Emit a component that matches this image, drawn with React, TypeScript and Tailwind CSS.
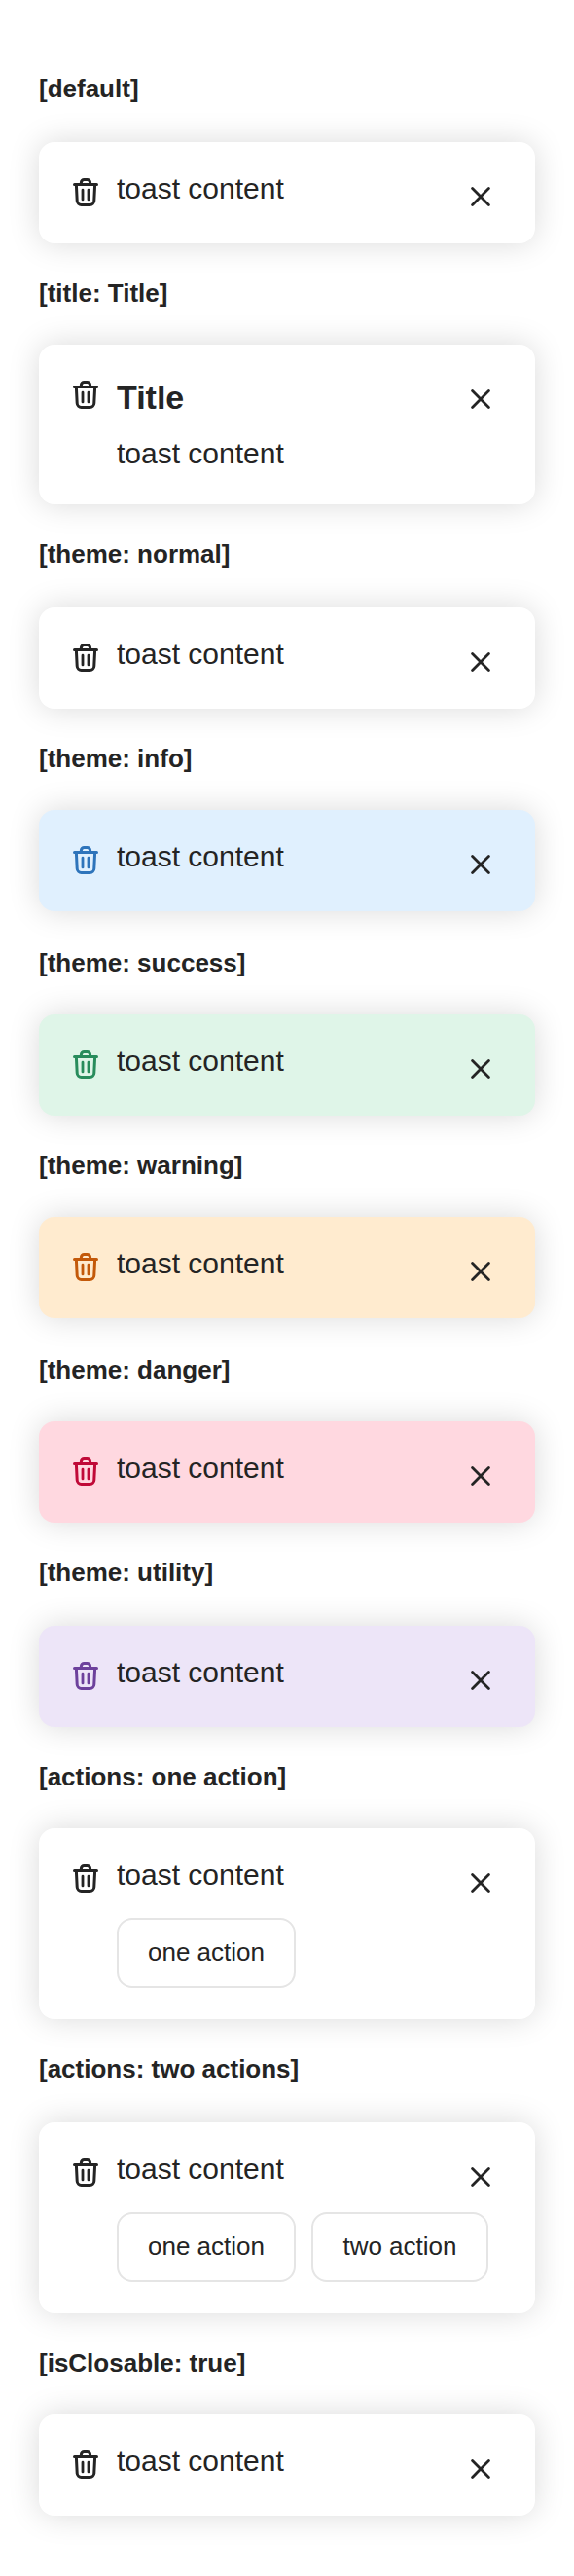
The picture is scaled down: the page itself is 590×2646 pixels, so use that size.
import React from "react";

type Theme = "normal" | "info" | "success" | "warning" | "danger" | "utility";

const surfaces: Record<Theme, string> = {
  normal: "bg-white",
  info: "bg-[#e0f0fe]",
  success: "bg-[#dff5e8]",
  warning: "bg-[#ffebcf]",
  danger: "bg-[#ffd8e0]",
  utility: "bg-[#ede5f8]",
};

const accents: Record<Theme, string> = {
  normal: "text-[#242424]",
  info: "text-[#2e74bb]",
  success: "text-[#288c5c]",
  warning: "text-[#c3590a]",
  danger: "text-[#c00a38]",
  utility: "text-[#6d419c]",
};

function TrashIcon() {
  return (
    <svg width="32" height="34" viewBox="0 0 32 34" fill="none" stroke="currentColor" strokeWidth="3" strokeLinecap="round" strokeLinejoin="round">
      <path d="M4.5 9.4H27.5" />
      <path d="M11.4 9V7.5A3 3 0 0 1 14.4 4.5H17.6A3 3 0 0 1 20.6 7.5V9" />
      <path d="M6.4 10L7.2 26.2A4.4 4.4 0 0 0 11.6 30.4H20.4A4.4 4.4 0 0 0 24.8 26.2L25.6 10" />
      <path d="M13 15.2V24.9M19 15.2V24.9" strokeWidth="2.8" />
    </svg>
  );
}

function CloseIcon() {
  return (
    <svg width="20" height="20" viewBox="0 0 20 20" fill="none" stroke="currentColor" strokeWidth="2.8" strokeLinecap="round">
      <path d="M1.6 1.6L18.4 18.4M18.4 1.6L1.6 18.4" />
    </svg>
  );
}

interface ToastProps {
  theme?: Theme;
  title?: string;
  actions?: string[];
}

function Toast({ theme = "normal", title, actions = [] }: ToastProps) {
  return (
    <div className={`flex items-start rounded-[16px] pb-8 pl-8 pt-8 shadow-[0_0_32px_rgba(0,0,0,0.15)] ${surfaces[theme]}`}>
      <div className={`mt-[2px] w-12 shrink-0 ${accents[theme]}`}>
        <TrashIcon />
      </div>
      <div className="min-w-0 flex-1">
        {title && <div className="mb-5 h-[44px] text-[34px] font-bold leading-[44px]">{title}</div>}
        <div className={`whitespace-nowrap text-[30px] leading-8 ${title ? "h-9" : "h-10"}`}>toast content</div>
        {actions.length > 0 && (
          <div className="mt-5 flex gap-4">
            {actions.map((action) => (
              <button key={action} className="h-[72px] min-w-[182px] whitespace-nowrap rounded-[16px] border-2 border-[#e5e5e5] px-[30px] pb-0.5 text-[26px] leading-8">
                {action}
              </button>
            ))}
          </div>
        )}
      </div>
      <button className="-ml-5 mr-[46px] mt-[14px]" aria-label="Close">
        <CloseIcon />
      </button>
    </div>
  );
}

interface Story extends ToastProps {
  label: string;
  spacing: string;
}

const stories: Story[] = [
  { label: "[default]", spacing: "h-[146px] pt-[76px]" },
  { label: "[title: Title]", spacing: "h-[104px] pt-9", title: "Title" },
  { label: "[theme: normal]", spacing: "h-[106px] pt-9" },
  { label: "[theme: info]", spacing: "h-[104px] pt-9", theme: "info" },
  { label: "[theme: success]", spacing: "h-[106px] pt-[38px]", theme: "success" },
  { label: "[theme: warning]", spacing: "h-[104px] pt-9", theme: "warning" },
  { label: "[theme: danger]", spacing: "h-[106px] pt-[38px]", theme: "danger" },
  { label: "[theme: utility]", spacing: "h-[106px] pt-9", theme: "utility" },
  { label: "[actions: one action]", spacing: "h-[104px] pt-9", actions: ["one action"] },
  { label: "[actions: two actions]", spacing: "h-[106px] pt-9", actions: ["one action", "two action"] },
  { label: "[isClosable: true]", spacing: "h-[104px] pt-9" },
];

export default function App() {
  return (
    <main className="h-[2646px] w-[590px] overflow-hidden bg-white px-10 font-['Liberation_Sans',Arial,sans-serif] text-[#242424]">
      {stories.map(({ label, spacing, ...toast }) => (
        <section key={label}>
          <h2 className={`text-[26px] font-bold leading-[30px] ${spacing}`}>{label}</h2>
          <Toast {...toast} />
        </section>
      ))}
    </main>
  );
}
